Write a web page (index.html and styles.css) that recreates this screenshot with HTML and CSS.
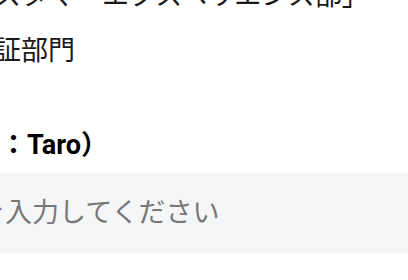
FILE: index.html
```html
<!DOCTYPE html>
<html>
<head>
  <meta charset="UTF-8">
  <title>プロフィール入力</title>
  <link rel="stylesheet" href="styles.css">
</head>
<body>
  <div class="form">
    <p class="hint">例「カスタマーエクスペリエンス部」<br>品質保証部門</p>
    <label class="field-label" for="firstName">名（例：Taro）</label>
    <input id="firstName" class="text-input" type="text" placeholder="名前を入力してください">
  </div>
</body>
</html>
```

FILE: styles.css
```css
html, body {
  margin: 0;
  overflow: hidden;
}
body {
  font-family: Roboto, "Noto Sans CJK JP", sans-serif;
  font-size: 27px;
  color: #111;
  background: #fff;
  text-spacing-trim: space-all;
}
.form {
  width: 540px;
  margin: -31px 0 0 -89px;
}
.hint {
  margin: 0 0 0 2px;
  line-height: 55px;
  color: #1a1a1a;
}
.field-label {
  display: block;
  margin: 47px 0 0 8px;
  font-size: 27px;
  line-height: 38px;
  font-weight: bold;
  color: #000;
}
.text-input {
  display: block;
  box-sizing: border-box;
  width: 100%;
  height: 80px;
  margin-top: 9px;
  padding: 0 13px;
  border: none;
  border-radius: 8px;
  background: #f5f6f8;
  font-family: Roboto, "Noto Sans CJK JP", sans-serif;
  font-size: 27px;
  color: #111;
}
.text-input::placeholder {
  color: #777;
}
.text-input:focus {
  outline: none;
}
```
